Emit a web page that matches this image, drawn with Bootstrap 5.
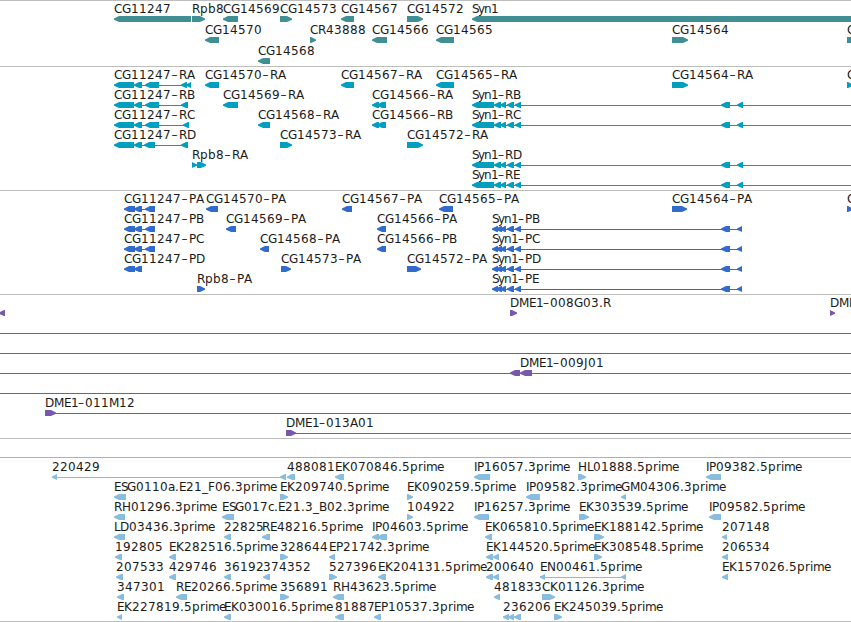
<!DOCTYPE html>
<html lang="en">
<head>
    <meta charset="UTF-8">
    <title>Genome Browser</title>
    <meta name="viewport" content="width=device-width, initial-scale=1">
    <!-- Bootstrap 5 -->
    <link href="https://cdn.jsdelivr.net/npm/bootstrap@5.3.3/dist/css/bootstrap.min.css" rel="stylesheet">
    <style>
        body {
            background: #fff;
            font-family: "DejaVu Sans", sans-serif;
        }
        .browser {
            height: 622px;
        }
        .track {
            border-top: 1px solid #bebebe;
            flex: none;
        }
        .track-row {
            height: 20px;
            flex: none;
        }
        .track-row text {
            font-size: 12px;
            fill: #1a1a1a;
        }
        .genes { height: 66px; color: #3f8f95; }
        .genes .track-row { height: 21px; }
        .transcripts { height: 124px; color: #009fbf; }
        .proteins { height: 104px; color: #316bcd; }
        .clones { height: 144px; color: #7858aa; }
        .ests { height: 183px; color: #88bddd; }
    </style>
</head>
<body>
    <main class="browser d-flex flex-column overflow-hidden">
        <section class="track genes d-flex flex-column" id="genes"></section>
        <section class="track transcripts d-flex flex-column" id="transcripts"></section>
        <section class="track proteins d-flex flex-column" id="proteins"></section>
        <section class="track clones d-flex flex-column" id="clones"></section>
        <section class="track ests d-flex flex-column" id="ests"></section>
        <div class="track"></div>
    </main>

    <!-- Bootstrap JS + Popper -->
    <script src="https://cdn.jsdelivr.net/npm/bootstrap@5.3.3/dist/js/bootstrap.bundle.min.js"></script>
    <script>
        const END = 851;

        // Exons shared by the Syn1 and CG11247 isoforms
        const synTail = [[500, 506], [507, 514], [515, 521], [721, 730], [737, 743]];
        const synR = [[472, 494], [494, 501], ...synTail];
        const synP = [[492, 498], [496, 502], ...synTail.slice(0, 4), [737, 742]];
        const cgR = [[114, 134], [134, 142], [145, 159]];
        const cgP = [[124, 135], [134, 142], [145, 155]];

        // Feature: [label, label x, strand, exons, line end (optional), line start (optional)]
        const tracks = {
            genes: [
                [
                    ['CG11247', 114, '<', [[114, 191]]],
                    ['Rpb8', 192, '>', [[192, 205]]],
                    ['CG14569', 223, '<', [[223, 238]]],
                    ['CG14573', 280, '>', [[280, 292]]],
                    ['CG14567', 341, '<', [[341, 354]]],
                    ['CG14572', 407, '>', [[407, 423]]],
                    ['Syn1', 472, '<', [[472, 870]]]
                ],
                [
                    ['CG14570', 205, '<', [[205, 219]]],
                    ['CR43888', 310, '>', [[310, 316]]],
                    ['CG14566', 372, '<', [[372, 387]]],
                    ['CG14565', 436, '<', [[436, 454]]],
                    ['CG14564', 672, '>', [[672, 688]]],
                    ['C', 847, '>', [[847, 870]]]
                ],
                [
                    ['CG14568', 258, '<', [[258, 270]]]
                ]
            ],
            transcripts: [
                [
                    ['CG11247-RA', 114, '<', [...cgR, [181, 187], [186, 191]]],
                    ['CG14570-RA', 205, '<', [[205, 219]]],
                    ['CG14567-RA', 341, '<', [[341, 354]]],
                    ['CG14565-RA', 436, '<', [[436, 454]]],
                    ['CG14564-RA', 672, '>', [[672, 688]]],
                    ['C', 847, '>', [[847, 853]]]
                ],
                [
                    ['CG11247-RB', 114, '<', [...cgR, [181, 188]]],
                    ['CG14569-RA', 223, '<', [[223, 238]]],
                    ['CG14566-RA', 372, '<', [[372, 379], [377, 386]]],
                    ['Syn1-RB', 472, '<', synR, END]
                ],
                [
                    ['CG11247-RC', 114, '<', [...cgR, [183, 189]]],
                    ['CG14568-RA', 258, '<', [[258, 270]]],
                    ['CG14566-RB', 372, '<', [[372, 379], [377, 386]]],
                    ['Syn1-RC', 472, '<', synR, END]
                ],
                [
                    ['CG11247-RD', 114, '<', [[114, 134], [134, 142], [144, 155], [181, 188]]],
                    ['CG14573-RA', 280, '>', [[280, 292]]],
                    ['CG14572-RA', 407, '>', [[407, 423]]]
                ],
                [
                    ['Rpb8-RA', 192, '>', [[192, 197], [197, 206]]],
                    ['Syn1-RD', 472, '<', synR, END]
                ],
                [
                    ['Syn1-RE', 472, '<', synR, END]
                ]
            ],
            proteins: [
                [
                    ['CG11247-PA', 124, '<', cgP],
                    ['CG14570-PA', 206, '<', [[206, 218]]],
                    ['CG14567-PA', 342, '<', [[342, 352]]],
                    ['CG14565-PA', 439, '<', [[439, 453]]],
                    ['CG14564-PA', 672, '>', [[672, 687]]],
                    ['C', 847, '>', [[847, 853]]]
                ],
                [
                    ['CG11247-PB', 124, '<', cgP],
                    ['CG14569-PA', 226, '<', [[226, 236]]],
                    ['CG14566-PA', 377, '<', [[377, 386]]],
                    ['Syn1-PB', 492, '<', synP]
                ],
                [
                    ['CG11247-PC', 124, '<', cgP],
                    ['CG14568-PA', 260, '<', [[260, 269]]],
                    ['CG14566-PB', 377, '<', [[377, 386]]],
                    ['Syn1-PC', 492, '<', synP]
                ],
                [
                    ['CG11247-PD', 124, '<', [[124, 135], [134, 142]]],
                    ['CG14573-PA', 281, '>', [[281, 291]]],
                    ['CG14572-PA', 407, '>', [[407, 421]]],
                    ['Syn1-PD', 492, '<', synP]
                ],
                [
                    ['Rpb8-PA', 197, '>', [[197, 205]]],
                    ['Syn1-PE', 492, '<', synP]
                ]
            ],
            clones: [
                [
                    ['', 0, '<', [[-1, 5]]],
                    ['DME1-008G03.R', 510, '>', [[510, 517]]],
                    ['DME1', 830, '>', [[830, 835]]]
                ],
                [['', 0, '>', [], END, 0]],
                [['', 0, '>', [], END, 0]],
                [['DME1-009J01', 520, '<', [[510, 520], [520, 532]], END, 0]],
                [['', 0, '>', [], END, 0]],
                [['DME1-011M12', 45, '>', [[45, 56]], END]],
                [['DME1-013A01', 286, '>', [[286, 296]], END]]
            ],
            ests: [
                [['', 0, '>', [], END, 0]],
                [
                    ['220429', 52, '<', [[52, 57], [280, 286]]],
                    ['488081', 287, '<', [[287, 295]]],
                    ['EK070846.5prime', 335, '<', [[335, 344]]],
                    ['IP16057.3prime', 474, '<', [[474, 490]]],
                    ['HL01888.5prime', 578, '>', [[578, 586]]],
                    ['IP09382.5prime', 706, '<', [[706, 721]]]
                ],
                [
                    ['ESG0110a.E21_F06.3prime', 114, '<', [[114, 126]]],
                    ['EK209740.5prime', 280, '>', [[280, 288]]],
                    ['EK090259.5prime', 407, '>', [[407, 413]]],
                    ['IP09582.3prime', 526, '<', [[526, 540]]],
                    ['GM04306.3prime', 621, '<', [[621, 626]]]
                ],
                [
                    ['RH01296.3prime', 114, '<', [[114, 125]]],
                    ['ESG017c.E21.3_B02.3prime', 222, '<', [[222, 234]]],
                    ['104922', 407, '>', [[407, 413]]],
                    ['IP16257.3prime', 474, '<', [[474, 489]]],
                    ['EK303539.5prime', 579, '>', [[579, 589]]],
                    ['IP09582.5prime', 709, '<', [[709, 721]]]
                ],
                [
                    ['LD03436.3prime', 114, '<', [[114, 125]]],
                    ['22825', 224, '<', [[224, 231]]],
                    ['RE48216.5prime', 262, '<', [[262, 270]]],
                    ['IP04603.5prime', 372, '<', [[372, 379], [377, 387]]],
                    ['EK065810.5prime', 485, '<', [[485, 492]]],
                    ['EK188142.5prime', 594, '>', [[594, 604]]],
                    ['207148', 722, '<', [[722, 727]]]
                ],
                [
                    ['192805', 115, '<', [[115, 122]]],
                    ['EK282516.5prime', 169, '<', [[169, 176]]],
                    ['328644', 280, '>', [[280, 288]]],
                    ['EP21742.3prime', 329, '<', [[329, 335]]],
                    ['EK144520.5prime', 486, '<', [[486, 493], [493, 499]]],
                    ['EK308548.5prime', 594, '>', [[594, 602]]],
                    ['206534', 722, '<', [[722, 728]]]
                ],
                [
                    ['207533', 116, '<', [[116, 123]]],
                    ['429746', 169, '<', [[169, 176]]],
                    ['36192', 224, '<', [[224, 231]]],
                    ['374352', 263, '<', [[263, 270]]],
                    ['527396', 329, '>', [[329, 337]]],
                    ['EK204131.5prime', 378, '<', [[378, 386]]],
                    ['200640', 486, '<', [[486, 493], [493, 499]]],
                    ['EN00461.5prime', 540, '<', [[540, 545], [621, 626]]],
                    ['EK157026.5prime', 722, '<', [[722, 728]]]
                ],
                [
                    ['347301', 117, '<', [[117, 124]]],
                    ['RE20266.5prime', 176, '<', [[176, 187]]],
                    ['356891', 280, '>', [[280, 289]]],
                    ['RH43623.5prime', 333, '<', [[333, 344]]],
                    ['481833', 494, '<', [[494, 500]]],
                    ['CK01126.3prime', 542, '>', [[542, 555]]]
                ],
                [
                    ['EK227819.5prime', 117, '<', [[117, 122]]],
                    ['EK030016.5prime', 224, '<', [[224, 231]]],
                    ['81887', 335, '<', [[335, 344]]],
                    ['EP10537.3prime', 374, '<', [[374, 381]]],
                    ['236206', 503, '<', [[503, 509], [508, 514], [514, 521]]],
                    ['EK245039.5prime', 554, '>', [[554, 562]]]
                ]
            ]
        };

        // Whole pixel advances, anything not listed is 8
        const advance = {
            D: 9, E: 7, F: 7, G: 9, H: 9, I: 3, J: 4, L: 6, M: 10, N: 9, P: 7, S: 6,
            a: 7, c: 6, e: 7, i: 3, m: 11, n: 7, r: 5, y: 6, '.': 4, '_': 6
        };

        function label(text, x) {
            const chars = text.replace('-', '–');
            const xs = [];
            let prev = '';
            for (const ch of chars) {
                // the dash sits tighter after a 1
                const tight = ch === '–' && prev === '1';
                if (tight) x -= 1;
                xs.push(x);
                x += (advance[ch] || 8) - (tight ? 1 : 0);
                prev = ch;
            }
            // a dash drawn a little to the right fills its wider cell
            const dash = chars.indexOf('–');
            if (dash > 0 && chars[dash - 1] !== '1') xs[dash] += 0.5;
            return `<text x="${xs.join(' ')}" y="12">${chars}</text>`;
        }

        // Arrow shaped exon, 6px high with a blunt tip
        function exon(a, b, strand) {
            const tip = Math.min(5, b - a);
            const pts = strand === '<'
                ? [[a, 17.4], [a + tip, 15], [b, 15], [b, 21], [a + tip, 21], [a, 18.8]]
                : [[b, 17.4], [b - tip, 15], [a, 15], [a, 21], [b - tip, 21], [b, 18.8]];
            return `<polygon points="${pts.join(' ')}"/>`;
        }

        function feature([text, x, strand, exons, lineEnd, lineStart]) {
            const from = lineStart ?? exons[0][0] + 2;
            const to = lineEnd ?? exons[exons.length - 1][1] - 2;
            let out = '';
            if (exons.length !== 1 || lineEnd) {
                out += `<rect x="${from}" y="18" width="${to - from}" height="1"/>`;
            }
            out += exons.map(e => exon(e[0], e[1], strand)).join('');
            if (text) out += label(text, x);
            return out;
        }

        for (const id in tracks) {
            document.getElementById(id).innerHTML = tracks[id].map(row =>
                `<svg class="track-row d-block w-100 overflow-visible" fill="currentColor">${row.map(feature).join('')}</svg>`
            ).join('');
        }
    </script>
</body>
</html>
